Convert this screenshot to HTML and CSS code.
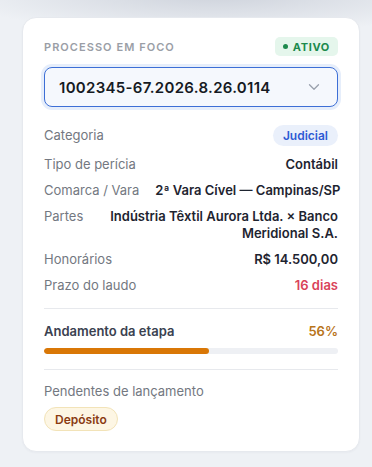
FILE: index.html
```html
<!DOCTYPE html>
<html lang="pt-BR">
<head>
<meta charset="utf-8">
<title>Processo em foco</title>
<link rel="stylesheet" href="styles.css">
</head>
<body>
<div class="page">
  <section class="card">
    <header class="card-head">
      <span class="eyebrow">Processo em foco</span>
      <span class="status"><span class="status-dot"></span>ATIVO</span>
    </header>
    <button class="select" type="button">
      <span class="select-value">1002345-67.2026.8.26.0114</span>
      <svg class="chevron" width="12" height="8" viewBox="0 0 12 8" aria-hidden="true"><path d="M1.5 1.8 6 6.2 10.5 1.8" fill="none" stroke="#9aa1ad" stroke-width="1.3" stroke-linecap="round" stroke-linejoin="round"/></svg>
    </button>
    <dl class="details">
      <div class="row">
        <dt>Categoria</dt>
        <dd><span class="pill pill-blue">Judicial</span></dd>
      </div>
      <div class="row">
        <dt>Tipo de perícia</dt>
        <dd>Contábil</dd>
      </div>
      <div class="row">
        <dt>Comarca / Vara</dt>
        <dd class="single">2ª Vara Cível — Campinas/SP</dd>
      </div>
      <div class="row">
        <dt>Partes</dt>
        <dd>Indústria Têxtil Aurora Ltda. × Banco Meridional S.A.</dd>
      </div>
      <div class="row">
        <dt>Honorários</dt>
        <dd>R$ 14.500,00</dd>
      </div>
      <div class="row">
        <dt>Prazo do laudo</dt>
        <dd class="danger">16 dias</dd>
      </div>
    </dl>
    <div class="progress-block">
      <div class="progress-head">
        <span class="progress-title">Andamento da etapa</span>
        <span class="progress-pct">56%</span>
      </div>
      <div class="track"><div class="fill" style="width:56%"></div></div>
    </div>
    <div class="pending">
      <div class="pending-title">Pendentes de lançamento</div>
      <div class="pending-list"><span class="pill pill-amber">Depósito</span></div>
    </div>
  </section>
</div>
</body>
</html>
```
FILE: styles.css
```css
* { box-sizing: border-box; }
html, body { margin: 0; padding: 0; }
body {
  width: 372px;
  height: 467px;
  overflow: hidden;
  font-family: Inter, "Noto Sans", "Liberation Sans", sans-serif;
  background:
    radial-gradient(ellipse 260px 40px at 215px -6px, rgba(200,205,215,0.85), rgba(200,205,215,0) 100%),
    #eef1f5;
}
.page {
  padding: 17px 12px 0 22px;
}
.card {
  background: #fff;
  border: 1px solid #e6e9ee;
  border-radius: 14px;
  padding: 19px 21px 20px 21px;
  width: 338px;
  box-shadow: 0 1px 2px rgba(20,30,50,0.03);
}
.card-head {
  display: flex;
  justify-content: space-between;
  align-items: center;
  height: 19px;
}
.eyebrow {
  font-size: 11px;
  font-weight: 600;
  letter-spacing: 0.095em;
  text-transform: uppercase;
  color: #9a9ea6;
}
.status {
  display: inline-flex;
  align-items: center;
  gap: 5px;
  height: 19px;
  padding: 0 8px 0 8px;
  border-radius: 5px;
  background: #e5f6ec;
  color: #1d8a4d;
  font-size: 11px;
  font-weight: 700;
  letter-spacing: 0.06em;
}
.status-dot {
  width: 5px;
  height: 5px;
  border-radius: 50%;
  background: #1d8a4d;
}
.select {
  margin-top: 11px;
  width: 100%;
  height: 40px;
  display: flex;
  align-items: center;
  justify-content: space-between;
  padding: 0 17px 0 14px;
  border: 1px solid #3d6fd6;
  border-radius: 8px;
  background: #f5f8fd;
  box-shadow: 0 0 0 3px #e6eefb;
  font: inherit;
  cursor: pointer;
}
.select-value {
  font-size: 15px;
  font-weight: 600;
  color: #151a23;
  letter-spacing: 0.02em;
}
.chevron { display: block; }
.details {
  margin: 18px 0 0 0;
  display: flex;
  flex-direction: column;
  gap: 9px;
}
.row {
  display: flex;
  justify-content: space-between;
  align-items: flex-start;
  gap: 16px;
  font-size: 13px;
  line-height: 17px;
}
.row:first-child { align-items: center; margin-bottom: 1px; }
.row dt {
  flex: none;
  color: #737881;
  white-space: nowrap;
}
.row dd {
  margin: 0;
  min-width: 0;
  text-align: right;
  font-weight: 600;
  color: #1e2430;
}
.row dd.single { white-space: nowrap; }
.row dd.danger { color: #d9435a; }
.pill {
  display: inline-flex;
  align-items: center;
  border-radius: 999px;
  font-weight: 600;
}
.pill-blue {
  height: 21px;
  padding: 0 10px;
  background: #eaf0fb;
  color: #2d5ad4;
  font-size: 12px;
}
.progress-block {
  margin-top: 14px;
  border-top: 1px solid #e7e9ed;
  padding-top: 14px;
  padding-bottom: 15px;
  border-bottom: 1px solid #e7e9ed;
}
.progress-head {
  display: flex;
  justify-content: space-between;
  font-size: 13px;
  line-height: 17px;
  font-weight: 600;
}
.progress-title { color: #3a4150; }
.progress-pct { color: #b8741a; }
.track {
  margin-top: 8px;
  height: 6px;
  border-radius: 3px;
  background: #eef0f4;
  overflow: hidden;
}
.fill {
  height: 100%;
  border-radius: 3px;
  background: #d97706;
}
.pending {
  padding-top: 13px;
}
.pending-title {
  font-size: 13px;
  line-height: 17px;
  color: #737881;
}
.pending-list {
  margin-top: 7px;
  display: flex;
  gap: 6px;
}
.pill-amber {
  height: 24px;
  padding: 0 10px;
  background: #fdf6e4;
  border: 1px solid #f2e3b8;
  color: #8a3b12;
  font-size: 12px;
}
```
